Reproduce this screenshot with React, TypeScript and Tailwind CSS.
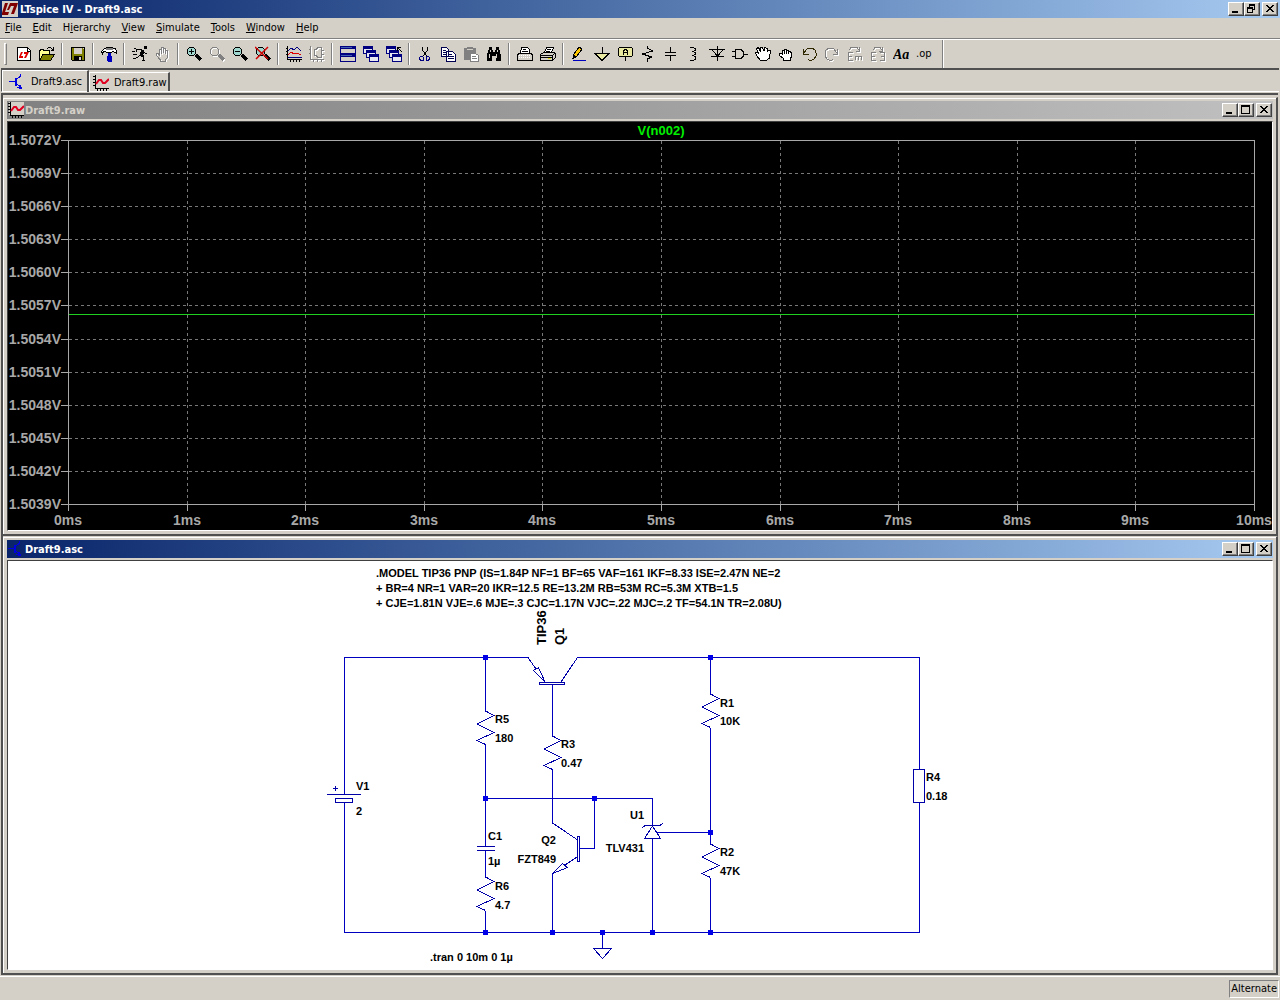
import type { ReactNode } from 'react';
import clsx from 'clsx';

type Tool = { label: string; disabled?: boolean; icon: ReactNode };

function Icon({ children }: { children: ReactNode }) {
  return (
    <svg viewBox="0 0 16 16" className="h-4 w-4 shrink-0" fill="none" stroke="#000" shapeRendering="crispEdges">
      {children}
    </svg>
  );
}

// Grey glyph with a white shadow, used for disabled tools
function Etched({ children }: { children: ReactNode }) {
  return (
    <>
      <g transform="translate(1 1)" stroke="#fff">{children}</g>
      <g stroke="#808080">{children}</g>
    </>
  );
}

const logo = (
  <>
    <path d="M0 0h16v16H0z" fill="#d4d0c8" stroke="none" />
    <path d="M3 2h3L3 11h4l-1 3H0v-2zM8 2h8l-1 3-3 8h-3l3-8H9L7 9H5z" fill="#800000" stroke="none" shapeRendering="auto" />
  </>
);

const waveIcon = (
  <>
    <path d="M1 0h15v13H1z" fill="#d4d0c8" stroke="none" />
    <path d="M2.5 0v14M2 13.5h14M0 1.5h2M0 4.5h2M0 7.5h2M0 10.5h2M4.5 14v2M7.5 14v2M10.5 14v2M13.5 14v2" />
    <path d="M3 9l3-4h2l2 3h2l4-4" stroke="#e00020" strokeWidth="2" shapeRendering="auto" />
  </>
);

const transistorIcon = (
  <>
    <path d="M0 7.5h6M11.5 0v2L7 6M7 9l4 4v2" stroke="#0000e0" />
    <path d="M6 4h2v8H6zM10 11h2v2h1v2h-3v-1H8v-1h2z" fill="#0000e0" stroke="none" />
  </>
);

const lens = (
  <>
    <path d="M3 1.5h5M3 9.5h5M1.5 3v5M9.5 3v5M2 2.5h1M8 2.5h1M2 8.5h1M8 8.5h1" />
    <path d="M10 9l5 5" strokeWidth="3" />
  </>
);

const lensGlass = <path d="M2 2h7v7H2z" fill="#a0d8d0" stroke="none" />;

const handPath = 'M4.5 9V3.5h2V8M6.5 7V1.5h2V7M8.5 7V2.5h2V8M10.5 7V4.5h2V11l-2 3v1.5h-5V14l-4-4.5v-2h1.5L5 10';

const documents = (
  <>
    <path d="M1.5 1.5h5l2 2v7h-7zM6.5 5.5h6l3 3v7h-9z" fill="#fff" stroke="#000050" />
    <path d="M3 4.5h3M3 6.5h3M3 8.5h3M8 8.5h4M8 10.5h6M8 12.5h6" stroke="#000050" />
  </>
);

const cascade = (
  <>
    <path d="M0 0h10v8H0z" fill="#000080" stroke="none" />
    <path d="M1 3h8v4H1z" fill="#e8e8f0" stroke="none" />
    <path d="M3 4h10v8H3z" fill="#000080" stroke="none" />
    <path d="M4 7h8v4H4z" fill="#e8e8f0" stroke="none" />
    <path d="M6 8h10v8H6z" fill="#000080" stroke="none" />
    <path d="M7 11h8v4H7z" fill="#e8e8f0" stroke="none" />
  </>
);

const toolGroups: Tool[][] = [
  [
    {
      label: 'New Schematic',
      icon: (
        <>
          <path d="M1.5 1.5h10l3 3v10h-13z" fill="#fff" />
          <path d="M11.5 1v4h3" />
          <path d="M5 6h2L5 10h2v2H3v-1zM8 6h5l-3 6H8l2-4H8z" fill="#e00000" stroke="none" shapeRendering="auto" />
        </>
      ),
    },
    {
      label: 'Open',
      icon: (
        <>
          <path d="M.5 14V4.5h1v-1h3v1h6V8" fill="#ffff90" />
          <path d="M.5 14.5L4 8.5h11.5l-4 6z" fill="#808000" />
          <path d="M8 2.5h1M9 1.5h3M12 2.5h1M13 3.5h2M14.5 1v3M12 4.5h3" />
        </>
      ),
    },
  ],
  [
    {
      label: 'Save',
      icon: (
        <>
          <path d="M1.5 1.5h13v13h-12l-1-1z" fill="#808000" />
          <path d="M4 2h8v6H4z" fill="#d4d0c8" stroke="none" />
          <path d="M4 10h8v5H4z" fill="#000" stroke="none" />
          <path d="M9 11h2v3H9zM13 2h1v1h-1z" fill="#d4d0c8" stroke="none" />
        </>
      ),
    },
  ],
  [
    {
      label: 'Control Panel',
      icon: (
        <>
          <path d="M.5 5.5l3-3h1l1-1h6l1 1h2l1 3v2l-3-2h-1l-1 1h-5l-1-1h-2l-1 2z" fill="#fff" />
          <path d="M5 2h7v2H5z" fill="#808080" stroke="none" />
          <path d="M7 7h3v3h1v5l-1 1H7l-1-1v-5h1z" fill="#0000c0" stroke="none" />
        </>
      ),
    },
  ],
  [
    {
      label: 'Run',
      icon: (
        <>
          <path d="M12 0h3v3h-3z" fill="#000" stroke="none" />
          <path d="M9 4h3v3l-2 2-2-1z" fill="#000" stroke="none" />
          <path d="M4 5.5l1-2h4l2 1M9 8l-3 3-2 1H1M9 8l3 2-1 4M11 6l2 1h2M8 9l3 2" />
          <path d="M0 5.5h3M1 8.5h4M2 2.5h2M10 14.5h3" />
        </>
      ),
    },
    { label: 'Halt', disabled: true, icon: <Etched><path d={handPath} /></Etched> },
  ],
  [
    { label: 'Zoom In', icon: <>{lensGlass}{lens}<path d="M3 5.5h5M5.5 3v5" /></> },
    { label: 'Pan', disabled: true, icon: <Etched>{lens}</Etched> },
    { label: 'Zoom Out', icon: <>{lensGlass}{lens}<path d="M3 5.5h5" /></> },
    {
      label: 'Zoom Full Extents',
      icon: <>{lensGlass}{lens}<path d="M0 1l13 12M13 1L1 13" stroke="#d00000" shapeRendering="auto" strokeWidth="1.5" /></>,
    },
  ],
  [
    {
      label: 'Autorange',
      icon: (
        <>
          <path d="M1.5 0v14M1 13.5h15M0 2.5h1M0 5.5h1M0 8.5h1M4.5 14v2M7.5 14v2M10.5 14v2M13.5 14v2" />
          <path d="M2 5l3-3 3 2 3-3 4 4" stroke="#000080" />
          <path d="M2 9l3-3 3 2 3-1 4 2" stroke="#e00000" />
          <path d="M2 11.5h14" stroke="#000080" />
        </>
      ),
    },
    {
      label: 'Plot Settings',
      disabled: true,
      icon: <Etched><path d="M1.5 0v14M1 13.5h14M5 3.5h2l2-2h3v10H9l-2-2H5zM12 4.5h3M12 8.5h3M4.5 14v2M8.5 14v2M12.5 14v2M0 3.5h2M0 7.5h2" /></Etched>,
    },
  ],
  [
    {
      label: 'Tile Windows',
      icon: (
        <>
          <path d="M0 0h16v16H0z" fill="#000080" stroke="none" />
          <path d="M1 3h14v4H1zM1 11h14v4H1z" fill="#d4d0c8" stroke="none" />
          <path d="M1 1.5h11M1 9.5h11" stroke="#4060b0" />
        </>
      ),
    },
    { label: 'Cascade Windows', icon: cascade },
    {
      label: 'Close All Windows',
      icon: (
        <>
          {cascade}
          <path d="M11.5 5V1.5H15M12 2l4 4" />
        </>
      ),
    },
  ],
  [
    {
      label: 'Cut',
      icon: (
        <>
          <path d="M5.5 1v3l5 7M10.5 1v3l-5 7" />
          <path d="M3.5 10.5h2l1 1v3h-3v-1h-1v-2zM9.5 10.5h2l1 1v2h-1v1h-2z" stroke="#000080" />
        </>
      ),
    },
    { label: 'Copy', icon: documents },
    {
      label: 'Paste',
      disabled: true,
      icon: (
        <>
          <path d="M1 2h3V1h6v1h3v12H1z" fill="#808080" stroke="none" />
          <path d="M4 3.5h6" stroke="#d4d0c8" />
          <path d="M7.5 7.5h5l3 2v6h-8z" fill="#fff" stroke="#808080" />
          <path d="M9 10.5h4M9 12.5h5" stroke="#808080" />
        </>
      ),
    },
    {
      label: 'Find',
      icon: (
        <>
          <path d="M3 1h3v3h1v2h2V4h1V1h3v3h1v2l1 3v6h-5v-5H6v5H1V9l1-3V4h1z" fill="#000" stroke="none" />
          <path d="M4.5 4v2M11.5 4v2M3.5 8v4M10.5 8v4" stroke="#d4d0c8" />
        </>
      ),
    },
  ],
  [
    {
      label: 'Print Preview',
      icon: (
        <>
          <path d="M3.5 7l1-5.500h6l2 2V7" fill="#fff" />
          <path d="M1.5 7.5h13l1 2v5H.5v-5z" fill="#d4d0c8" />
          <path d="M2 9.5h12M2 11.5h12" stroke="#fff" strokeDasharray="1 1" />
          <path d="M6 3.5h3M5 5.5h6" />
        </>
      ),
    },
    {
      label: 'Print',
      icon: (
        <>
          <path d="M4.5 6.5l2-5h7l-2 5z" fill="#fff" />
          <path d="M.5 8.5l3-2h10l2 1v4l-3 3h-12z" fill="#d4d0c8" />
          <path d="M1 9.5h11l3-2M12.5 9v5M7 3.5h4M6 5.5h4M1 11.5h11" />
          <path d="M8 12h3v1H8z" fill="#e0e000" stroke="none" />
        </>
      ),
    },
  ],
  [
    {
      label: 'Draw Wire',
      icon: (
        <>
          <path d="M2 12l1-4 5-7 3 2-5 7z" fill="#ffc800" />
          <path d="M2 13V9h1l2 2v1H3v1z" fill="#000" stroke="none" />
          <path d="M2 14.5h13" stroke="#0000c0" />
        </>
      ),
    },
    {
      label: 'Ground',
      icon: <><path d="M8.5 1v6" /><path d="M1 7.5h14L8 14.5z" fill="#e8e8a0" /></>,
    },
    {
      label: 'Label Net',
      icon: (
        <>
          <path d="M2.5 1.5h12l1 1v7l-1 1h-12l-1-1v-7z" fill="#e8e8a0" />
          <path d="M8.5 11v4M6.5 9V4.5h1v-1h2v1h1V9M7 6.5h3" />
        </>
      ),
    },
    { label: 'Resistor', icon: <path d="M7.5 0v2l5 3-10 3 9 3-4 2v3" /> },
    { label: 'Capacitor', icon: <path d="M7.5 1v5M2 6.5h11M2 9.5h11M7.5 10v5" /> },
    { label: 'Inductor', icon: <path d="M4 1.5h3l2 1v2l-2 1H6h1l2 1v2l-2 1H6h1l2 1v3l-2 1H4" /> },
    { label: 'Diode', icon: <path d="M8.5 0v15M0 3.5h16M3 4l5.5 6L14 4M2 10.5h13" /> },
    { label: 'Component', icon: <path d="M3.5 3.5h5l2 1 1 2v3l-1 2-2 1h-5zM0 5.5h3M0 10.5h3M12 8.5h4" /> },
    {
      label: 'Move',
      icon: <path d="M5.5 14.5l-4-5-1-3h2l1 1-2-5 2-1 2 4V1.5h2L9 5l1-3.5 2 1V6l2-2 1.5 1-1 7-3 2.5h-5z" fill="#fff" />,
    },
    {
      label: 'Drag',
      icon: <path d="M5.5 14.5v-2l-4-3v-2h2l1 1V4.5h2v-1h2v1h2v1h2v1h1v4l-1 2v2zM6.5 5v3M8.5 5v3M10.5 6v2" fill="#fff" />,
    },
    { label: 'Undo', icon: <path d="M2.5 3v5h5M3 7l3-4 2-1h3l3 2 1 3v3l-2 3-2 1H8l-1-1" stroke="#302800" /> },
    { label: 'Redo', disabled: true, icon: <Etched><path d="M13.5 3v5h-5M13 7l-3-4-2-1H5L2 4 1 7v3l2 3 2 1h3l1-1" /></Etched> },
    {
      label: 'Rotate',
      disabled: true,
      icon: <Etched><path d="M6 6.5H1.5v8H6M2 10.5h3M8.5 14v-4h6v4M11.5 10v4M2 4l2-2.5h6l2 2.5M12.5 1v4H9" /></Etched>,
    },
    {
      label: 'Mirror',
      disabled: true,
      icon: <Etched><path d="M6 6.5H1.5v8H6M2 10.5h3M10 6.5h4.5v8H10M14 10.5h-3M3 4l2-2.5h5l2 2.5M12.5 1v4H9" /></Etched>,
    },
    {
      label: 'Text',
      icon: (
        <text x="0" y="13" fontSize="14" fontWeight="bold" fontStyle="italic" fontFamily="Liberation Serif, serif" fill="#000" stroke="none">
          Aa
        </text>
      ),
    },
    {
      label: 'SPICE Directive',
      icon: (
        <text x="0" y="11" fontSize="11" fontFamily="DejaVu Sans Condensed, DejaVu Sans, sans-serif" fill="#000" stroke="none">
          .op
        </text>
      ),
    },
  ],
];

const menus = ['File', 'Edit', 'Hierarchy', 'View', 'Simulate', 'Tools', 'Window', 'Help'];
const accessKey: Record<string, number> = { Hierarchy: 1 };

function CaptionButton({ kind }: { kind: 'Minimize' | 'Maximize' | 'Restore' | 'Close' }) {
  return (
    <button
      type="button"
      aria-label={kind}
      className={clsx(
        'flex h-[14px] w-4 items-center justify-center border border-t-white border-r-[#404040] border-b-[#404040] border-l-white bg-[#d4d0c8] shadow-[inset_-1px_-1px_0_#808080]',
        kind === 'Close' && 'ml-[2px]',
      )}
    >
      <svg viewBox="0 0 14 12" className="h-3 w-[14px]" fill="none" stroke="#000" shapeRendering="crispEdges">
        {kind === 'Minimize' && <path d="M3 9h6" strokeWidth="2" />}
        {kind === 'Maximize' && <path d="M2 2h9M2.5 1v9M10.5 1v9M2 9.5h9M2 1.5h9" />}
        {kind === 'Restore' && <path d="M4 1.5h6M4 2.5h6M4.5 1v3M9.5 1v6M8 6.5h2M2 4.5h6M2 5.5h6M2.5 4v6M7.5 4v6M2 9.5h6" />}
        {kind === 'Close' && (
          <path
            d="M3 2h2v1h1v1h2V3h1V2h2v1h-1v1H9v1H8v1h1v1h1v1h1v1H9V8H8V7H6v1H5v1H3V8h1V7h1V6h1V5H5V4H4V3H3z"
            fill="#000"
            stroke="none"
          />
        )}
      </svg>
    </button>
  );
}

type ChildWindowProps = { title: string; active?: boolean; icon: ReactNode; children: ReactNode };

function ChildWindow({ title, active, icon, children }: ChildWindowProps) {
  return (
    <section className="border-t border-r-2 border-b-2 border-t-[#d4d0c8] border-r-[#505050] border-b-[#505050]">
      <div className="border-t border-l border-white pt-[2px] pr-[3px] pb-[3px] pl-[3px]">
        <header
          className={clsx(
            'flex h-[18px] items-center bg-linear-to-r pr-px pl-px text-[11px] font-bold',
            active ? 'from-[#0a246a] to-[#a6caf0] text-white' : 'from-[#808080] to-[#c0c0c0] text-[#d4d0c8]',
          )}
        >
          <Icon>{icon}</Icon>
          <h2 className="grow pt-px pl-px">{title}</h2>
          <CaptionButton kind="Minimize" />
          <CaptionButton kind="Maximize" />
          <CaptionButton kind="Close" />
        </header>
        <div className="mt-[2px] border border-t-[#404040] border-r-white border-b-white border-l-[#404040]">{children}</div>
      </div>
    </section>
  );
}

const voltages = ['1.5072V', '1.5069V', '1.5066V', '1.5063V', '1.5060V', '1.5057V', '1.5054V', '1.5051V', '1.5048V', '1.5045V', '1.5042V', '1.5039V'];
const plot = { left: 60.5, right: 1246.5, top: 18.5, bottom: 382.5 };

function WavePlot() {
  // snap to the middle of a pixel so the grid stays sharp
  const gridX = (i: number) => Math.floor(plot.left + ((plot.right - plot.left) * i) / 10) + 0.5;
  const gridY = (i: number) => Math.round(plot.top - 0.5 + ((plot.bottom - plot.top) * i) / 11) + 0.5;

  return (
    <svg viewBox="0 0 1264 408" className="block w-full bg-black" fontFamily="Liberation Sans, Arial, sans-serif" fontWeight="bold">
      <g shapeRendering="crispEdges" stroke="#a8a8a8" fill="none">
        {voltages.map((v, i) => (
          <path key={v} d={`M53 ${gridY(i)}h7`} />
        ))}
        {Array.from({ length: 11 }, (_, i) => (
          <path key={i} d={`M${gridX(i)} 383v6`} />
        ))}
        <g stroke="#787878" strokeDasharray="3 3">
          {voltages.slice(1, -1).map((v, i) => (
            <path key={v} d={`M61 ${gridY(i + 1)}H1246`} />
          ))}
          {Array.from({ length: 9 }, (_, i) => (
            <path key={i} d={`M${gridX(i + 1)} 19V382`} />
          ))}
        </g>
        <path d={`M${plot.left} ${plot.top}H${plot.right}V${plot.bottom}H${plot.left}z`} />
        <path d="M61 192.5H1246" stroke="#20d020" />
      </g>
      <g fill="#a8a8a8" fontSize="14">
        {voltages.map((v, i) => (
          <text key={v} x="53" y={gridY(i) + 4.5} textAnchor="end">{v}</text>
        ))}
        {Array.from({ length: 11 }, (_, i) => (
          <text key={i} x={gridX(i) - 0.5} y="403" textAnchor="middle">{i}ms</text>
        ))}
      </g>
      <text x="653" y="13" fontSize="13" textAnchor="middle" fill="#00f000">V(n002)</text>
    </svg>
  );
}

const directives = [
  '.MODEL TIP36 PNP (IS=1.84P NF=1 BF=65 VAF=161 IKF=8.33 ISE=2.47N NE=2',
  '+ BR=4 NR=1 VAR=20 IKR=12.5 RE=13.2M RB=53M RC=5.3M XTB=1.5',
  '+ CJE=1.81N VJE=.6 MJE=.3 CJC=1.17N VJC=.22 MJC=.2 TF=54.1N TR=2.08U)',
];

const partLabels: [string, number, number][] = [
  ['V1', 356, 790], ['2', 356, 815],
  ['R5', 495, 723], ['180', 495, 742],
  ['R3', 561, 748], ['0.47', 561, 767],
  ['C1', 488, 840], ['1µ', 488, 865],
  ['R6', 495, 890], ['4.7', 495, 909],
  ['R1', 720, 707], ['10K', 720, 725],
  ['R2', 720, 856], ['47K', 720, 875],
  ['R4', 926, 781], ['0.18', 926, 800],
];

const leftLabels: [string, number, number][] = [
  ['Q2', 556, 844], ['FZT849', 556, 863],
  ['U1', 644, 819], ['TLV431', 644, 852],
];

const junctions = [
  [485, 657], [710, 657], [485, 798], [594, 798], [710, 832],
  [485, 932], [552, 932], [602, 932], [652, 932], [710, 932],
];

const resistors = [[485.5, 711], [552.5, 736], [485.5, 877], [710.5, 694], [710.5, 844]];

function Schematic() {
  return (
    <svg viewBox="8 561 1264 408" className="block w-full bg-white" fontFamily="Liberation Sans, Arial, sans-serif" fontWeight="bold" fontSize="11">
      <g shapeRendering="crispEdges" fill="none" stroke="#0000a8">
        {/* wires */}
        <g stroke="#0000c0">
          <path d="M344.5 794V657.5H528M577 657.5H919.5V769M919.5 802V932.5H344.5V802" />
          <path d="M485.5 657V711M485.5 744V846M485.5 851V877M485.5 911V932" />
          <path d="M485 798.5H652.5V825M652.5 839V932M594.5 798V848.5H580" />
          <path d="M552.5 685V736M552.5 769V823M552.5 874V932M602.5 932V948" />
          <path d="M710.5 657V694M710.5 728V844M710.5 878V932M657 832.5H710" />
        </g>
        {/* R1, R2, R3, R5, R6 */}
        {resistors.map(([x, y]) => (
          <path key={`${x}-${y}`} d={`M${x} ${y}l8.5 4.5-17 8.500 17 8.500-17 8 8.500 4`} />
        ))}
        {/* V1, C1, R4 */}
        <path d="M327 794.5H361M335.5 798.5H352.5V802.5H335.5zM333 788.5h5M335.5 786v5" />
        <path d="M477 846.5H495M477 850.5H495" />
        <path d="M913.5 769.5H924.5V802.5H913.5z" />
        {/* Q1, Q2 */}
        <path d="M539.5 682.5H564.5V684.5H539.5zM577.5 657.5L561 682M528 657.5L536 669M545 682L533.5 670.5L538.5 667.5z" />
        <path d="M577.5 836.5H579.5V861.5H577.5zM552.5 823L577 839.5M577 857L565 865M552.5 873.5L562.5 863.5L567.5 867.5z" />
        {/* U1, ground */}
        <path d="M642 828L645 825.5H660L663 823M652.5 826L644.5 838.5H660.5z" />
        <path d="M593.5 948.5H611.5L602.5 958.5z" />
      </g>
      {junctions.map(([x, y]) => (
        <rect key={`${x}-${y}`} x={x - 2} y={y - 2} width="5" height="5" fill="#0000e8" />
      ))}
      {directives.map((line, i) => (
        <text key={line} x="376" y={577 + i * 15}>{line}</text>
      ))}
      {partLabels.map(([text, x, y]) => (
        <text key={text} x={x} y={y}>{text}</text>
      ))}
      {leftLabels.map(([text, x, y]) => (
        <text key={text} x={x} y={y} textAnchor="end">{text}</text>
      ))}
      <text transform="translate(546 645) rotate(-90)" fontSize="13">TIP36</text>
      <text transform="translate(564 645) rotate(-90)" fontSize="13">Q1</text>
      <text x="430" y="961">.tran 0 10m 0 1µ</text>
    </svg>
  );
}

export default function App() {
  return (
    <div className="flex min-h-screen flex-col bg-[#d4d0c8] font-['DejaVu_Sans_Condensed','DejaVu_Sans',sans-serif] text-[11px] leading-4 text-black">
      <header className="flex h-[18px] items-center bg-linear-to-r from-[#0a246a] to-[#a6caf0] pr-[2px] pl-[2px] font-bold text-white">
        <Icon>{logo}</Icon>
        <h1 className="grow pt-px pl-[2px]">LTspice IV - Draft9.asc</h1>
        <CaptionButton kind="Minimize" />
        <CaptionButton kind="Restore" />
        <CaptionButton kind="Close" />
      </header>

      <nav className="flex h-5 items-center gap-[11px] pl-[5px]">
        {menus.map((name) => {
          const at = accessKey[name] ?? 0;
          return (
            <button key={name} type="button">
              {name.slice(0, at)}
              <span className="underline">{name[at]}</span>
              {name.slice(at + 1)}
            </button>
          );
        })}
      </nav>

      <div className="border-t border-[#808080]">
        <div className="flex h-[29px] items-center border-t border-white pl-1">
          <div className="mr-[5px] h-[22px] w-[3px] border border-t-white border-r-[#808080] border-b-[#808080] border-l-white" />
          {toolGroups.map((group, i) => (
            <div key={i} className="flex items-center">
              {i > 0 && <div className="mx-[3px] h-[22px] w-[2px] border-r border-l border-r-white border-l-[#808080]" />}
              {group.map((tool) => (
                <button
                  key={tool.label}
                  type="button"
                  aria-label={tool.label}
                  disabled={tool.disabled}
                  className="flex h-[22px] w-[23px] items-center justify-center"
                >
                  <Icon>{tool.icon}</Icon>
                </button>
              ))}
            </div>
          ))}
          <div className="ml-[7px] h-full w-[2px] border-r border-l border-r-white border-l-[#808080]" />
        </div>
      </div>

      <div className="mx-px flex h-[24px] items-start border-t-2 border-b border-l border-t-[#505050] border-b-white border-l-[#505050]">
        <button type="button" className="flex h-[22px] w-[87px] items-center gap-[6px] border-t border-r-2 border-l border-t-white border-r-[#505050] border-l-white pl-[6px]">
          <Icon>{transistorIcon}</Icon>
          Draft9.asc
        </button>
        <button type="button" className="mt-[2px] flex h-[19px] w-[81px] items-center gap-[5px] border-t border-r-2 border-l border-t-white border-r-[#505050] border-l-white pt-[2px] pl-[3px]">
          <Icon>{waveIcon}</Icon>
          Draft9.raw
        </button>
      </div>

      <main className="mt-px mr-[2px] ml-px flex flex-col border-t-2 border-l-2 border-[#505050] pt-[2px]">
        <ChildWindow title="Draft9.raw" icon={waveIcon}>
          <WavePlot />
        </ChildWindow>
        <ChildWindow title="Draft9.asc" active icon={transistorIcon}>
          <Schematic />
        </ChildWindow>
      </main>

      <footer className="mt-px flex justify-end border-t border-white pt-[3px] pr-px">
        <div className="border border-t-[#808080] border-r-white border-b-white border-l-[#808080] px-px">Alternate</div>
      </footer>
    </div>
  );
}
